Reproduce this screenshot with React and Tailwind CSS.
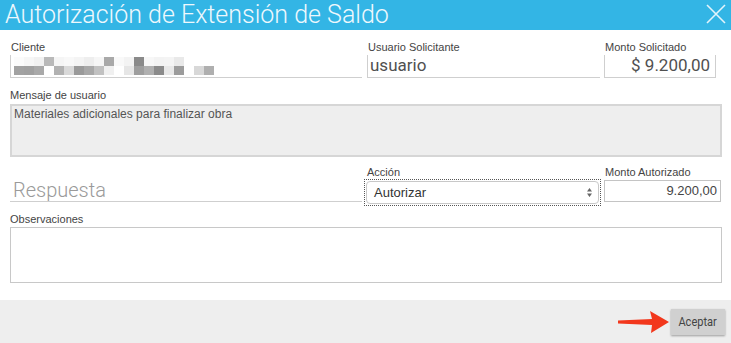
import React from 'react';

// pixelated (blurred) client name mosaic
const mosaicTop = ['#fbfbfb', '#f6f6f6', '#f1f1f1', '#b9b9b9', '#f5f5f5', '#f8f8f8', '#f4f4f4', '#eeeeee', '#f6f6f6', '#a9a9a9', '#f9f9f9', '#f3f3f3', '#8a8a8a', '#f7f7f7', '#f3f3f3', '#f4f4f4', '#e9e9e9'];
const mosaicBottom = ['#a2a2a2', '#a0a0a0', '#a9a9a9', '#ffffff', '#b2b2b2', '#d9d9d9', '#9a9a9a', '#a8a8a8', '#c1c1c1', '#f0f0f0', '#ffffff', '#e6e6e6', '#9e9e9e', '#b0b0b0', '#8b8b8b', '#e8e8e8', '#9c9c9c', '#ffffff', '#d8d8d8', '#afafaf'];

const Label = ({ children, className = '' }) => (
  <div className={`h-[13px] text-[11px] leading-[13px] text-[#444] ${className}`}>{children}</div>
);

export default function App() {
  return (
    <div className="w-[731px] h-[343px] bg-white flex flex-col font-['Liberation_Sans',Arial,sans-serif] overflow-hidden">
      {/* Header */}
      <div className="h-[30px] bg-[#33b5e5] flex items-center justify-between pl-[5px] pr-[4px] shrink-0">
        <span className="font-['Roboto',sans-serif] font-light text-[25px] leading-none text-[#eef8fd] -mt-[1px]">
          Autorización de Extensión de Saldo
        </span>
        <svg width="22" height="22" viewBox="0 0 22 22" className="mb-[2px]">
          <path d="M2 2 L20 20 M20 2 L2 20" stroke="#e2f4fb" strokeWidth="1.6" fill="none" />
        </svg>
      </div>

      {/* Body */}
      <div className="flex-1 px-[10px] pt-[11px]">
        {/* Row 1 */}
        <div className="flex">
          <div className="w-[352px]">
            <Label className="pl-[1px]">Cliente</Label>
            <div className="mt-[1px] h-[23px] border-l border-b border-[#cfcfcf] flex flex-col justify-center pl-[3px]">
              <div className="flex">
                {mosaicTop.map((c, i) => (
                  <div key={i} className="w-[10px] h-[9px]" style={{ background: c }} />
                ))}
              </div>
              <div className="flex">
                {mosaicBottom.map((c, i) => (
                  <div key={i} className="w-[10px] h-[9px]" style={{ background: c }} />
                ))}
              </div>
            </div>
          </div>
          <div className="w-[233px] ml-[5px]">
            <Label className="pl-[1px]">Usuario Solicitante</Label>
            <div className="mt-[1px] h-[23px] border-l border-b border-[#cfcfcf] flex items-center pl-[2px] font-['Roboto',sans-serif] text-[17px] text-[#505050]">
              usuario
            </div>
          </div>
          <div className="w-[112px] ml-[4px]">
            <Label className="pl-[1px]">Monto Solicitado</Label>
            <div className="mt-[1px] h-[23px] border-l border-b border-r border-[#cfcfcf] flex items-center justify-end pr-[5px] font-['Roboto',sans-serif] text-[17px] text-[#505050]">
              $ 9.200,00
            </div>
          </div>
        </div>

        {/* Row 2 */}
        <div className="mt-[11px]">
          <Label>Mensaje de usuario</Label>
          <div className="mt-[2px] w-[712px] h-[53px] bg-[#eeeeee] border-2 border-[#d6d6d6] px-[2px] pt-[1px] text-[12px] leading-[14px] text-[#555]">
            Materiales adicionales para finalizar obra
          </div>
        </div>

        {/* Row 3 */}
        <div className="flex mt-[9px]">
          <div className="w-[352px] h-[36px] border-b border-[#cfcfcf] flex items-end pl-[3px] pb-[1px] font-['Roboto',sans-serif] font-light text-[20px] leading-none text-[#9a9a9a]">
            Respuesta
          </div>
          <div className="w-[237px] ml-[2px]">
            <Label className="pl-[3px] h-[12px]">Acción</Label>
            <div className="h-[27px] border border-dotted border-[#555] p-[1px]">
              <div className="h-full rounded-[4px] border border-[#c8c8c8] flex items-center justify-between pl-[7px] pr-[5px] text-[13px] text-[#333]">
                <span>Autorizar</span>
                <svg width="7" height="11" viewBox="0 0 7 11">
                  <path d="M3.5 1 L6 4.5 L1 4.5 Z M3.5 10 L6 6.5 L1 6.5 Z" fill="#666" />
                </svg>
              </div>
            </div>
          </div>
          <div className="w-[117px] ml-[3px]">
            <Label className="pl-[1px]">Monto Autorizado</Label>
            <div className="mt-[1px] h-[22px] border border-[#c4c4c4] flex items-center justify-end pr-[3px] text-[13px] text-[#444]">
              9.200,00
            </div>
          </div>
        </div>

        {/* Row 4 */}
        <div className="mt-[7px]">
          <Label>Observaciones</Label>
          <div className="mt-[1px] w-[712px] h-[56px] bg-white border border-[#c8c8c8]" />
        </div>
      </div>

      {/* Footer */}
      <div className="h-[43px] bg-[#eeeeee] flex items-center justify-end pr-[6px] shrink-0">
        <svg width="52" height="24" viewBox="0 0 52 24" className="mr-[1px]">
          <path d="M0 10.5 L34 9 L32 1 L51 12 L33 23 L34 15 L0 13.5 Z" fill="#f2371c" />
        </svg>
        <button className="w-[54px] h-[26px] bg-[#d0d0d0] shadow-[0_1px_2px_rgba(0,0,0,0.35)] font-['Roboto',sans-serif] text-[13px] text-[#444] flex items-center justify-center">
          <span className="inline-block scale-x-[0.85]">Aceptar</span>
        </button>
      </div>
    </div>
  );
}
